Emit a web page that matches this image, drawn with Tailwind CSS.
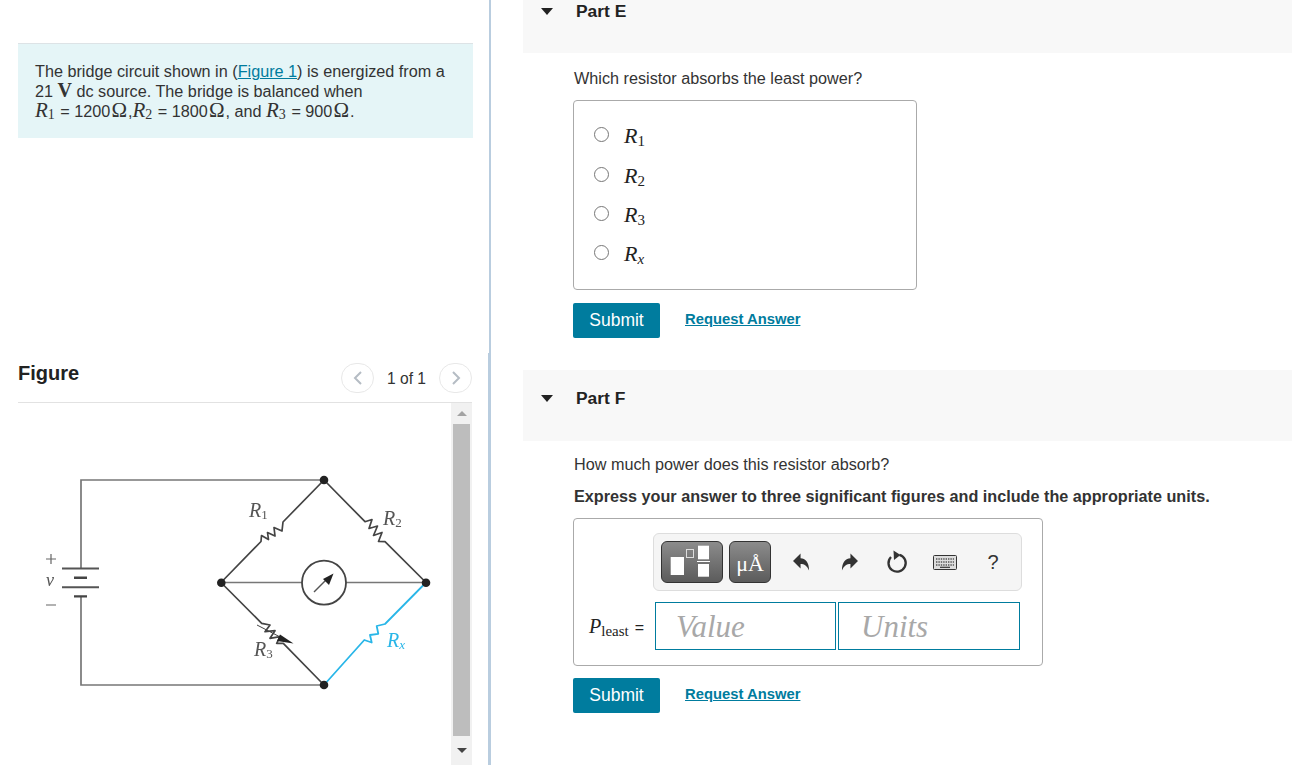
<!DOCTYPE html>
<html lang="en">
<head>
  <meta charset="UTF-8" />
  <title>Bridge circuit | Parts E and F</title>
  <script src="https://cdn.jsdelivr.net/npm/@tailwindcss/browser@4"></script>
</head>
<body class="bg-white text-[#333] font-['Liberation_Sans',Arial,sans-serif] text-[16.22px]">
  <div class="flex h-[765px] w-[1292px] overflow-hidden">

    <!-- Left column: problem text and figure -->
    <aside class="w-[491px] shrink-0 flex flex-col">
      <section class="h-[353px] border-r-2 border-[#b9cddf] pl-[18px] pr-[16px] pt-[43px]">
        <div class="h-[95px] bg-[#e5f5f7] border-t border-[#dde3e6] pl-[17px] pt-[18px] leading-[19.5px]">
          <p class="h-[19.5px]">The bridge circuit shown in (<a href="#" class="text-[#007c9e] underline">Figure 1</a>) is energized from a</p>
          <p class="h-[19.5px] -mt-[2px]">21 <span class="font-['Liberation_Serif',serif] font-bold text-[20px] leading-none">V</span> dc source. The bridge is balanced when</p>
          <p class="h-[19.5px] mt-[1px]"><i class="font-['Liberation_Serif',serif] text-[21px] leading-none">R</i><span class="text-[14px] font-['Liberation_Serif',serif] relative top-[2px]">1</span> <span class="ml-[1px]">=</span> 1200<span class="mx-[1px] font-['Liberation_Serif',serif] text-[21px] leading-none">Ω</span>,<i class="font-['Liberation_Serif',serif] text-[21px] leading-none">R</i><span class="text-[14px] font-['Liberation_Serif',serif] relative top-[2px]">2</span> <span class="ml-[1px]">=</span> 1800<span class="mx-[1px] font-['Liberation_Serif',serif] text-[21px] leading-none">Ω</span>, and <i class="font-['Liberation_Serif',serif] text-[21px] leading-none">R</i><span class="text-[14px] font-['Liberation_Serif',serif] relative top-[2px]">3</span> <span class="ml-[1px]">=</span> 900<span class="mx-[1px] font-['Liberation_Serif',serif] text-[21px] leading-none">Ω</span>.</p>
        </div>
      </section>

      <section class="h-[412px] border-r-[3px] border-[#b9cddf] pl-[18px] pr-[16px] flex flex-col">
        <div class="h-[50px] shrink-0 flex border-b border-[#e2e2e2]">
          <h2 class="font-bold text-[20px] leading-[40px] text-[#222]">Figure</h2>
          <div class="ml-auto flex items-center">
            <button class="w-[33px] h-[30px] rounded-full border border-[#e8e8e8] flex items-center justify-center">
              <svg width="10" height="16" viewBox="0 0 10 16" fill="none" stroke="#b5bcc4" stroke-width="2"><path d="M8 2L2 8l6 6"/></svg>
            </button>
            <span class="w-[65px] text-center text-[15.6px] pt-[2px]">1 of 1</span>
            <button class="w-[33px] h-[30px] rounded-full border border-[#e8e8e8] flex items-center justify-center">
              <svg width="10" height="16" viewBox="0 0 10 16" fill="none" stroke="#b5bcc4" stroke-width="2"><path d="M2 2l6 6-6 6"/></svg>
            </button>
          </div>
        </div>

        <div class="flex-1 flex min-h-0">
          <svg class="w-[433px] h-[362px] blur-[0.5px]" viewBox="18 403 433 362" fill="none">
            <g stroke="#777" stroke-width="1.7">
              <path d="M81 568V480H324M81 597V685H324M221 582.5H302M346 582.5H426"/>
              <path d="M62 568.5H99M62 587.3H99" stroke="#555" stroke-width="2"/>
              <path d="M74 577.7H87M74 596.4H87" stroke="#444" stroke-width="2.4"/>
            </g>
            <g stroke="#444" stroke-width="1.7" stroke-linejoin="round">
              <path d="M221 582.5L261 541.5 261.5 535.5 268.5 539.5 267.5 532.5 275 536 274 527.5 282 531 283 522 324 480"/>
              <path d="M324 480L365 521.7 372 519.5 369 528.5 377.5 526 373.5 535.5 382 532.5 378.5 541.5 385 541.7 426 582.5"/>
              <path d="M221 582.5L261.7 623.3 270 625 265 631.7 275 630.7 270 638.3 280 636.7 276.7 643.3 283.3 643.3 324 685"/>
              <path d="M257 625L284 639" stroke-width="1"/>
            </g>
            <path d="M426 582.5L385 624 376.7 626 378.3 633.8 370 635 371.7 642.5 364.3 640 324 685" stroke="#29b6e8" stroke-width="1.8" stroke-linejoin="round"/>
            <path d="M293.5 643.5L280 634.5 277 641Z" fill="#222"/>
            <circle cx="324" cy="582.7" r="22" stroke="#444" stroke-width="1.8" fill="#fff"/>
            <path d="M314 592L328 578" stroke="#555" stroke-width="1.4"/>
            <path d="M333.5 573.5L323 579 329 585Z" fill="#222"/>
            <g fill="#222">
              <circle cx="324" cy="480" r="4.3"/>
              <circle cx="221.3" cy="582.7" r="4.3"/>
              <circle cx="426" cy="582.7" r="4.3"/>
              <circle cx="324" cy="685" r="4.3"/>
            </g>
            <path d="M46 559H56M51 554V564M46 605H56" stroke="#666" stroke-width="1.2"/>
            <g font-family="'Liberation Serif',serif" font-style="italic" fill="#555">
              <text x="46" y="586" font-size="18">v</text>
              <text x="249" y="517" font-size="20">R<tspan font-size="13" font-style="normal" dy="2">1</tspan></text>
              <text x="383" y="525" font-size="20">R<tspan font-size="13" font-style="normal" dy="2">2</tspan></text>
              <text x="254" y="656" font-size="20">R<tspan font-size="13" font-style="normal" dy="2">3</tspan></text>
              <text x="387" y="647" font-size="20" fill="#29b6e8">R<tspan font-size="13" dy="2">x</tspan></text>
            </g>
          </svg>
          <div class="w-[21px] shrink-0 bg-[#f1f1f1] flex flex-col items-center">
            <div class="h-[21px] flex items-center justify-center">
              <div class="w-0 h-0 border-x-[5px] border-x-transparent border-b-[5px] border-b-[#a3a3a3]"></div>
            </div>
            <div class="w-[17px] h-[312px] bg-[#bdbdbd]"></div>
            <div class="h-[28px] flex items-center justify-center">
              <div class="w-0 h-0 border-x-[5px] border-x-transparent border-t-[5px] border-t-[#444]"></div>
            </div>
          </div>
        </div>
      </section>
    </aside>

    <!-- Right column: Part E and Part F -->
    <main class="flex-1 pl-[32px]">
      <div class="h-[53px] bg-[#f8f8f8] flex items-start pl-[18px]">
        <div class="w-0 h-0 mt-[8px] border-x-[6.5px] border-x-transparent border-t-[7px] border-t-[#222]"></div>
        <h3 class="ml-[23px] font-bold text-[17.4px] leading-[23px] text-[#222]">Part E</h3>
      </div>
      <div class="pl-[50px]">
        <p class="mt-[14px] pl-[1px] leading-[22px]">Which resistor absorbs the least power?</p>
        <div class="mt-[11px] w-[344px] h-[190px] border border-[#aaa] rounded-[4px] pl-[20px] pt-[14px]">
          <label class="h-[39.4px] flex items-center"><input type="radio" name="least" class="w-[15px] h-[15px] m-0 accent-[#007c9e]"/><span class="ml-[15px] relative top-[1px] font-['Liberation_Serif',serif] italic text-[22px] text-[#222]">R<span class="text-[15px] not-italic relative top-[3px]">1</span></span></label>
          <label class="h-[39.4px] flex items-center"><input type="radio" name="least" class="w-[15px] h-[15px] m-0 accent-[#007c9e]"/><span class="ml-[15px] relative top-[1px] font-['Liberation_Serif',serif] italic text-[22px] text-[#222]">R<span class="text-[15px] not-italic relative top-[3px]">2</span></span></label>
          <label class="h-[39.4px] flex items-center"><input type="radio" name="least" class="w-[15px] h-[15px] m-0 accent-[#007c9e]"/><span class="ml-[15px] relative top-[1px] font-['Liberation_Serif',serif] italic text-[22px] text-[#222]">R<span class="text-[15px] not-italic relative top-[3px]">3</span></span></label>
          <label class="h-[39.4px] flex items-center"><input type="radio" name="least" class="w-[15px] h-[15px] m-0 accent-[#007c9e]"/><span class="ml-[15px] relative top-[1px] font-['Liberation_Serif',serif] italic text-[22px] text-[#222]">R<span class="text-[15px] relative top-[3px]">x</span></span></label>
        </div>
        <div class="mt-[13px] flex items-center">
          <button class="w-[87px] h-[35px] bg-[#007c9e] rounded-[2px] text-white text-[17.5px] pb-[1px]">Submit</button>
          <a href="#" class="ml-[25px] mb-[2px] text-[#007c9e] font-bold text-[14.8px] underline">Request Answer</a>
        </div>
      </div>

      <div class="mt-[32px] h-[71px] bg-[#f8f8f8] flex items-start pl-[18px] pt-[17px]">
        <div class="w-0 h-0 mt-[8px] border-x-[6.5px] border-x-transparent border-t-[7px] border-t-[#222]"></div>
        <h3 class="ml-[23px] font-bold text-[17.4px] leading-[23px] text-[#222]">Part F</h3>
      </div>
      <div class="pl-[50px]">
        <p class="mt-[12px] pl-[1px] leading-[22px]">How much power does this resistor absorb?</p>
        <p class="mt-[10px] pl-[1px] leading-[22px] font-bold">Express your answer to three significant figures and include the appropriate units.</p>
        <div class="mt-[11px] w-[470px] h-[148px] border border-[#aaa] rounded-[4px] pt-[14px]">
          <div class="ml-[79px] w-[369px] h-[58px] bg-[#f5f5f5] border border-[#ddd] rounded-[6px] flex items-center pl-[7px]">
            <button class="w-[62px] h-[42px] rounded-[6px] border border-[#333] bg-linear-to-b from-[#8c8c8c] to-[#5c5c5c] flex items-center justify-center">
              <svg width="44" height="34" viewBox="0 0 44 34" fill="#fff">
                <rect x="0.7" y="12" width="13.3" height="18"/>
                <rect x="16.5" y="4.5" width="7" height="8" fill="none" stroke="#ddd"/>
                <rect x="28" y="0.7" width="11" height="13.6"/>
                <rect x="27" y="16" width="13" height="1"/>
                <rect x="28" y="19" width="11" height="12.7"/>
              </svg>
            </button>
            <button class="ml-[6px] w-[42px] h-[42px] rounded-[6px] border border-[#333] bg-linear-to-b from-[#8c8c8c] to-[#5c5c5c] text-white font-['Liberation_Serif',serif] text-[22px] leading-none pt-[4px]">μÅ</button>
            <div class="ml-[6px] w-[48px] flex justify-center">
              <svg width="17" height="18" viewBox="0 0 18 18" fill="#333"><path d="M0 8L8 0V5C13 5 17 9 17 18 15 13 12 11 8 11V16Z"/></svg>
            </div>
            <div class="w-[48px] flex justify-center">
              <svg width="17" height="18" viewBox="0 0 18 18" fill="#333"><path d="M18 8L10 0V5C5 5 1 9 1 18 3 13 6 11 10 11V16Z"/></svg>
            </div>
            <div class="w-[48px] flex justify-center">
              <svg width="22" height="24" viewBox="0 0 22 24" fill="none"><path d="M13.5 4.8A8.6 8.6 0 1 1 5 7" stroke="#333" stroke-width="2.3"/><path d="M7.5 0.5L14.5 5 8 10Z" fill="#333"/></svg>
            </div>
            <div class="w-[48px] flex justify-center">
              <svg width="24" height="15" viewBox="0 0 24 15"><rect x="0.5" y="0.5" width="23" height="14" rx="1" fill="#ddd" stroke="#333"/><path d="M3 4H21M3 7H21M3 10H21" stroke="#555" stroke-width="1.4" stroke-dasharray="1.4 1"/><path d="M7 12.3H17" stroke="#333" stroke-width="1.2"/></svg>
            </div>
            <div class="w-[48px] text-center text-[20px] text-[#333]">?</div>
          </div>
          <div class="mt-[11px] flex items-center pl-[15px]">
            <div class="w-[66px] flex items-baseline text-[#222] font-['Liberation_Serif',serif]">
              <i class="text-[20px]">P</i>
              <span class="text-[15px] relative top-[3px]">least</span>
              <span class="ml-[6px] text-[16px] font-['Liberation_Sans',sans-serif]">=</span>
            </div>
            <div class="w-[181px] h-[48px] border border-[#007c9e] pl-[20px] font-['Liberation_Serif',serif] italic text-[31px] leading-[47px] text-[#a8a8a8]">Value</div>
            <div class="ml-[2px] w-[182px] h-[48px] border border-[#007c9e] pl-[22px] font-['Liberation_Serif',serif] italic text-[31px] leading-[47px] text-[#a8a8a8]">Units</div>
          </div>
        </div>
        <div class="mt-[12px] flex items-center">
          <button class="w-[87px] h-[35px] bg-[#007c9e] rounded-[2px] text-white text-[17.5px] pb-[1px]">Submit</button>
          <a href="#" class="ml-[25px] mb-[2px] text-[#007c9e] font-bold text-[14.8px] underline">Request Answer</a>
        </div>
      </div>
    </main>
  </div>
</body>
</html>
